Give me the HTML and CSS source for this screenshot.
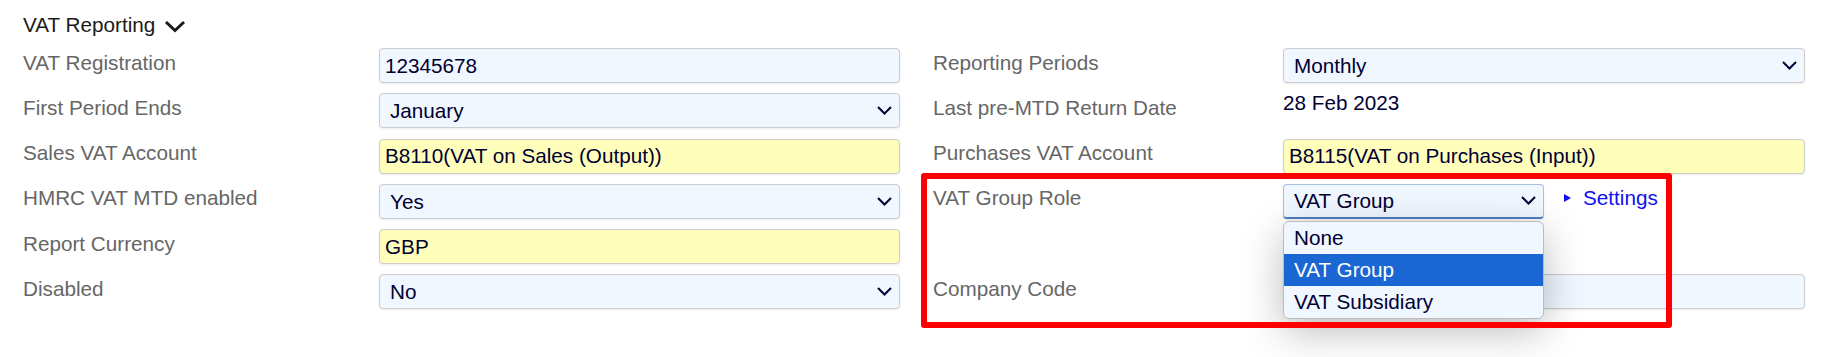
FILE: index.html
```html
<!DOCTYPE html>
<html lang="en">
<head>
    <meta charset="UTF-8">
    <title>VAT Reporting</title>
    <link rel="stylesheet" href="styles.css">
</head>
<body>
    <section class="panel">
        <h2 class="panel-title">
            VAT Reporting
            <svg class="toggle" width="22" height="13" viewBox="0 0 22 13"><polyline points="2,2 11,10.5 20,2" fill="none" stroke="#1a1a1a" stroke-width="3"/></svg>
        </h2>

        <div class="form">
            <div class="col col-left">
                <label>VAT Registration</label>
                <input class="field" type="text" value="12345678">

                <label>First Period Ends</label>
                <div class="field select"><span>January</span><svg width="15" height="9" viewBox="0 0 15 9"><polyline points="1,1 7.5,7.5 14,1" fill="none" stroke="#000033" stroke-width="2"/></svg></div>

                <label>Sales VAT Account</label>
                <input class="field lookup" type="text" value="B8110(VAT on Sales (Output))">

                <label>HMRC VAT MTD enabled</label>
                <div class="field select"><span>Yes</span><svg width="15" height="9" viewBox="0 0 15 9"><polyline points="1,1 7.5,7.5 14,1" fill="none" stroke="#000033" stroke-width="2"/></svg></div>

                <label>Report Currency</label>
                <input class="field lookup" type="text" value="GBP">

                <label>Disabled</label>
                <div class="field select"><span>No</span><svg width="15" height="9" viewBox="0 0 15 9"><polyline points="1,1 7.5,7.5 14,1" fill="none" stroke="#000033" stroke-width="2"/></svg></div>
            </div>

            <div class="col col-right">
                <label>Reporting Periods</label>
                <div class="field select"><span>Monthly</span><svg width="15" height="9" viewBox="0 0 15 9"><polyline points="1,1 7.5,7.5 14,1" fill="none" stroke="#000033" stroke-width="2"/></svg></div>

                <label>Last pre-MTD Return Date</label>
                <div class="static">28 Feb 2023</div>

                <label>Purchases VAT Account</label>
                <input class="field lookup" type="text" value="B8115(VAT on Purchases (Input))">

                <label>VAT Group Role</label>
                <div class="inline">
                    <div class="dropdown">
                        <div class="field select focused"><span>VAT Group</span><svg width="15" height="9" viewBox="0 0 15 9"><polyline points="1,1 7.5,7.5 14,1" fill="none" stroke="#000033" stroke-width="2"/></svg></div>
                        <ul class="options">
                            <li>None</li>
                            <li class="selected">VAT Group</li>
                            <li>VAT Subsidiary</li>
                        </ul>
                    </div>
                    <a class="settings" href="#"><svg width="7" height="8" viewBox="0 0 7 8"><polygon points="0,0 7,4 0,8" fill="#1010f0"/></svg>Settings</a>
                </div>

                <label></label>
                <div></div>

                <label>Company Code</label>
                <input class="field" type="text" value="">

                <div class="highlight-box"></div>
            </div>
        </div>
    </section>
</body>
</html>
```

FILE: styles.css
```css
html, body {
    min-height: 100vh;
}
body {
    margin: 0;
    font-family: "Liberation Sans", Arial, sans-serif;
    font-size: 20.7px;
    background: #fff;
    color: #000033;
}
.panel {
    padding: 13px 0 40px 23px;
}
.panel-title {
    margin: 0;
    font-size: 20.7px;
    font-weight: normal;
    line-height: 23px;
    color: #1a1a1a;
    display: flex;
    align-items: center;
    gap: 9px;
}
.panel-title .toggle {
    margin-top: 4px;
}
.form {
    display: flex;
    gap: 33px;
    margin-top: 12px;
}
.col {
    display: grid;
    grid-auto-rows: 35px;
    row-gap: 10.3px;
}
.col-left {
    grid-template-columns: 356px 521px;
}
.col-right {
    grid-template-columns: 350px 522px;
    position: relative;
}
.col label {
    color: #666;
    line-height: 23px;
    padding-top: 2.5px;
}
.field {
    box-sizing: border-box;
    height: 35px;
    margin: 0;
    border: 1px solid #cdcdcd;
    border-radius: 4px;
    background: #f0f7ff;
    box-shadow: 0 1px 2px rgba(0,0,0,0.08);
    font: inherit;
    color: #000033;
    padding: 0 5px;
    outline: none;
}
.field.lookup {
    background: #ffffbb;
}
.select {
    display: flex;
    align-items: center;
    justify-content: space-between;
    padding: 0 7px 0 10px;
}
.select span {
    line-height: 23px;
}
.select.focused {
    border-color: #a9bfdf;
    border-bottom: 2px solid #4d7fc4;
}
.static {
    line-height: 23px;
    margin-top: -2px;
}
.inline {
    display: flex;
    align-items: flex-start;
}
.dropdown {
    position: relative;
    width: 261px;
}
.options {
    position: absolute;
    top: 37px;
    left: 0;
    right: 0;
    margin: 0;
    padding: 0;
    list-style: none;
    background: #f0f7ff;
    border: 1px solid #bcbcbc;
    border-radius: 6px;
    box-shadow: 0 12px 40px rgba(0,0,0,0.27);
    overflow: hidden;
    z-index: 2;
}
.options li {
    height: 32px;
    line-height: 32px;
    padding-left: 10px;
}
.options li.selected {
    background: #1a66d2;
    color: #fff;
}
.settings {
    display: flex;
    align-items: center;
    gap: 12px;
    margin: 0 0 0 20px;
    padding-top: 2.5px;
    line-height: 23px;
    color: #1010f0;
    text-decoration: none;
}
.highlight-box {
    position: absolute;
    left: -12px;
    top: 125px;
    width: 751px;
    height: 155px;
    box-sizing: border-box;
    border: 6px solid #ff0000;
    border-radius: 3px;
    z-index: 3;
    pointer-events: none;
}
```
